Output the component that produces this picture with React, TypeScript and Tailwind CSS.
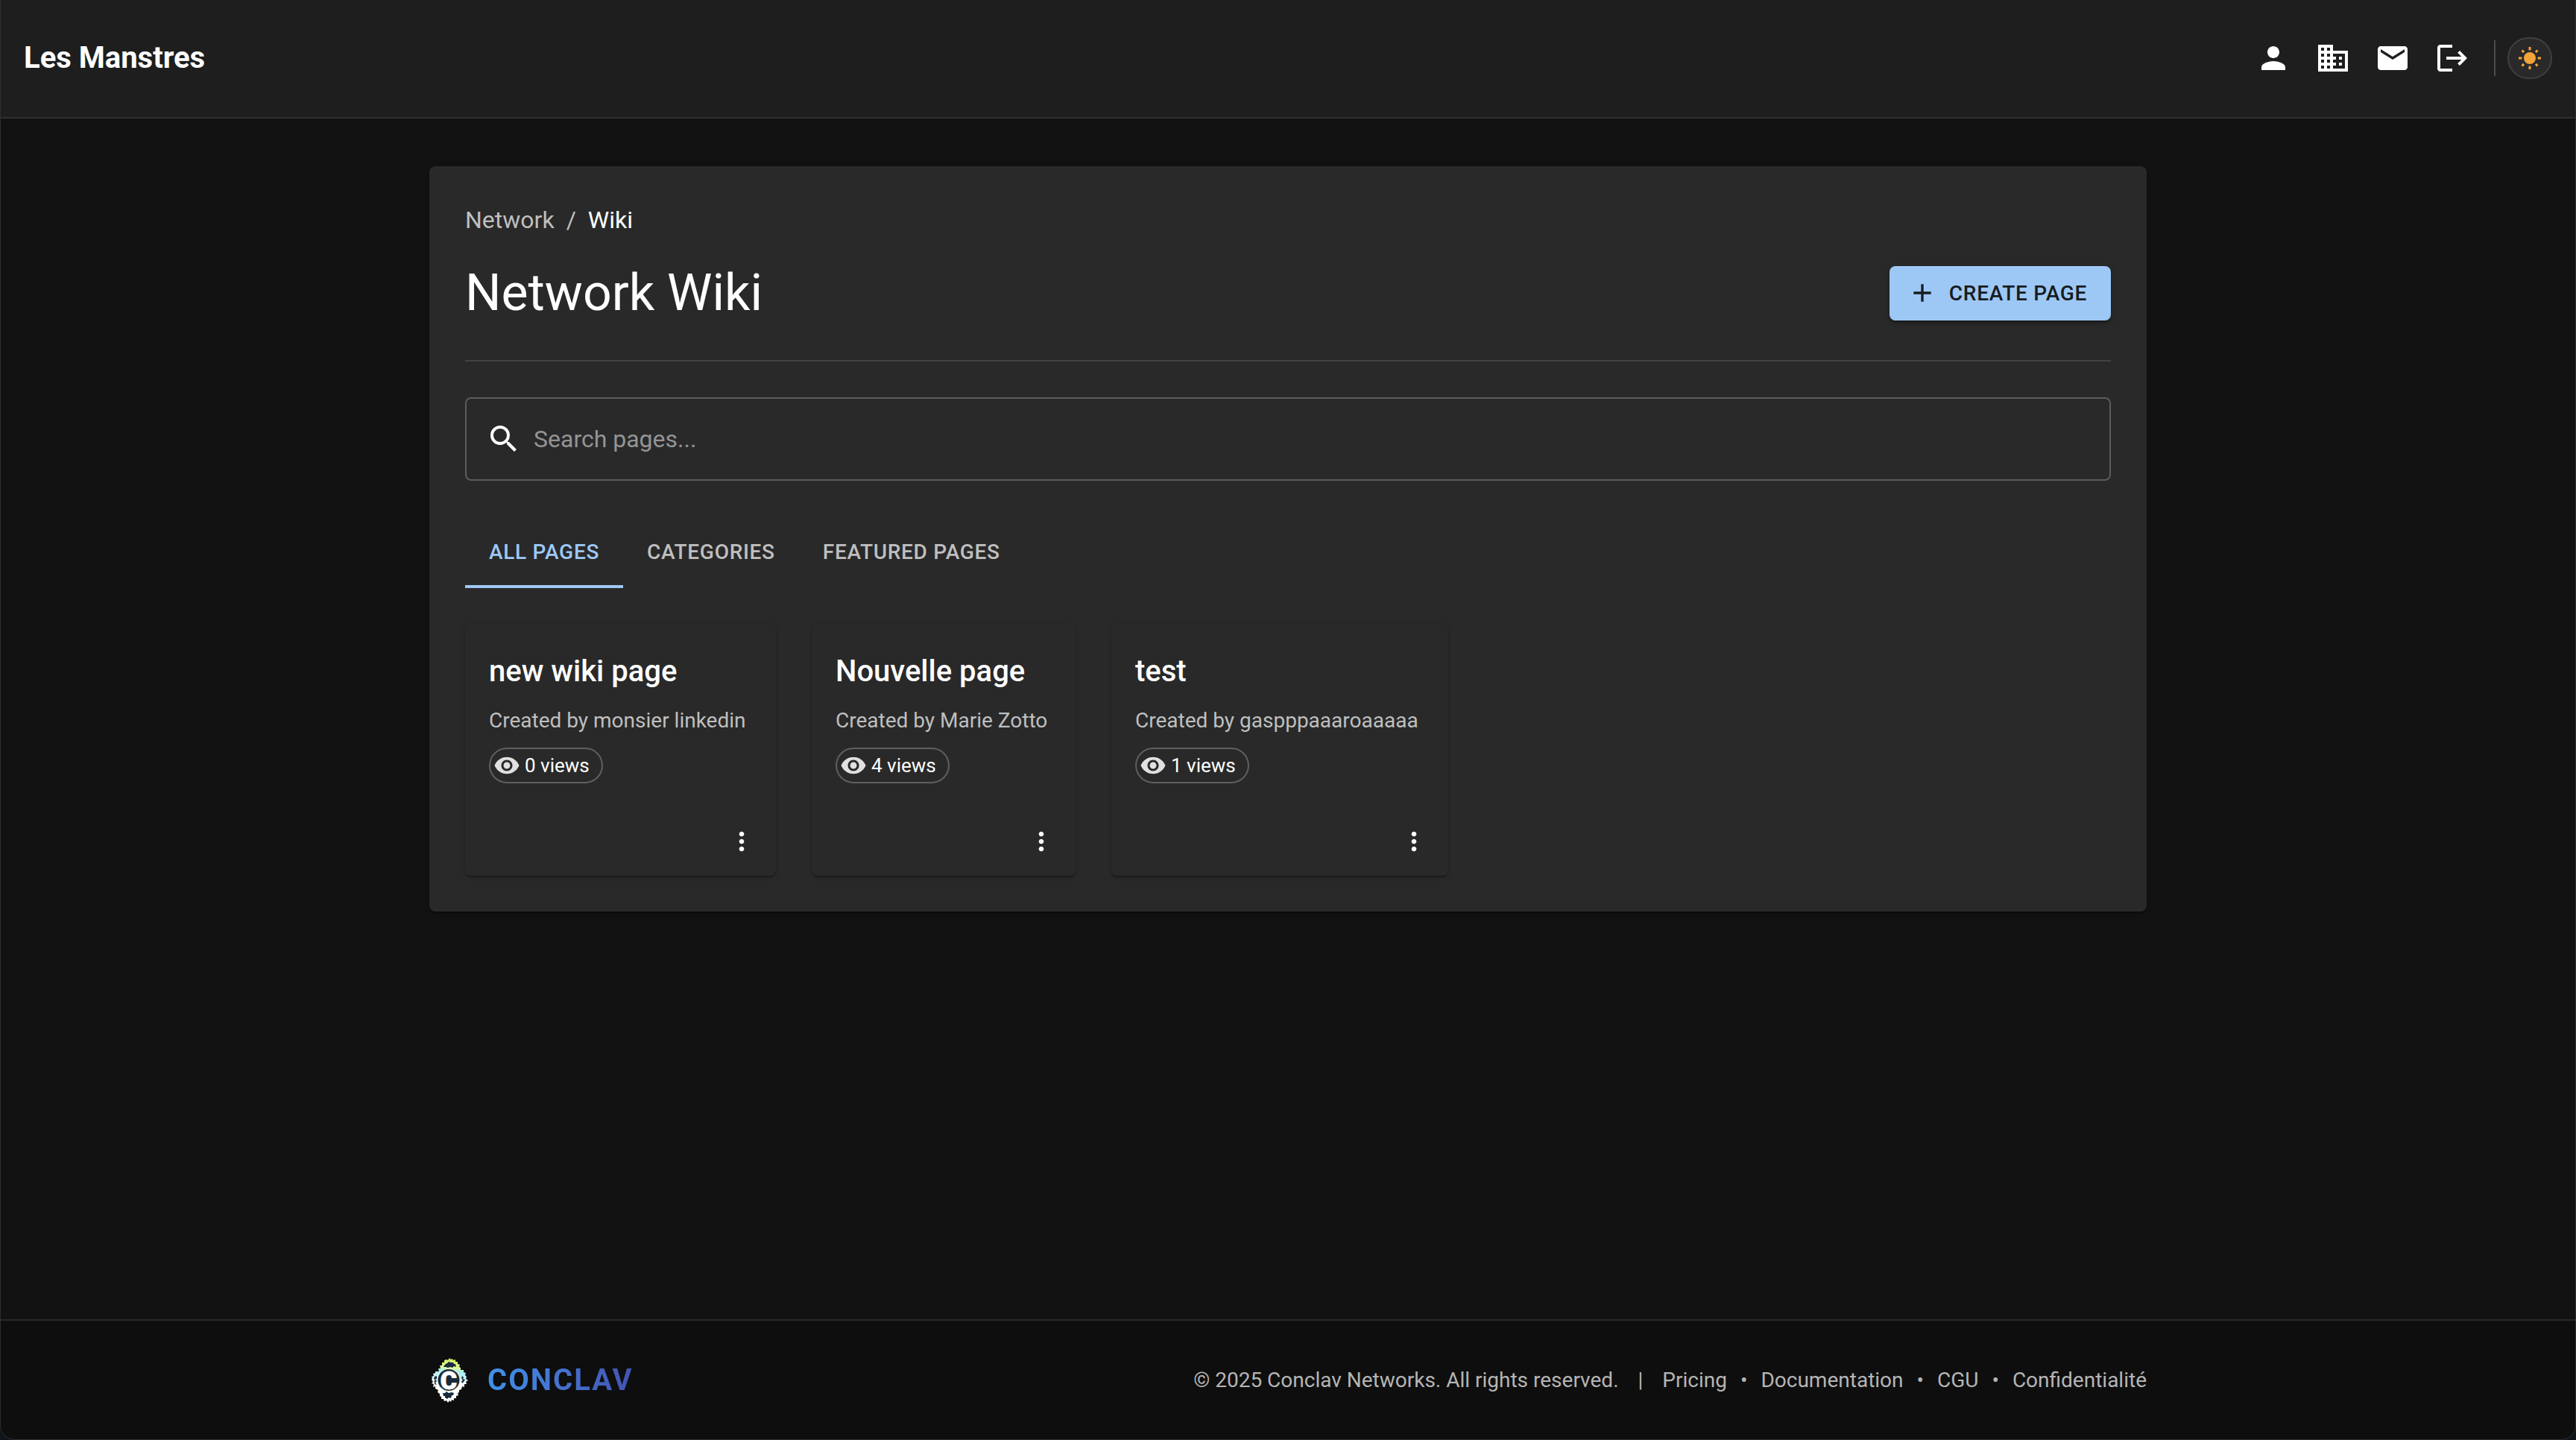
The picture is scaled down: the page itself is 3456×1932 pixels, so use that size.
import type { ReactNode } from "react";
import {
  MdPerson,
  MdBusiness,
  MdMail,
  MdLogout,
  MdAdd,
  MdSearch,
  MdVisibility,
  MdMoreVert,
} from "react-icons/md";

const wikiPages = [
  { title: "new wiki page", author: "monsier linkedin", views: 0, width: "min-w-[417px]" },
  { title: "Nouvelle page", author: "Marie Zotto", views: 4, width: "min-w-[354px]" },
  { title: "test", author: "gaspppaaaroaaaaa", views: 1, width: "min-w-[452px]" },
];

const tabs = ["All pages", "Categories", "Featured pages"];

const footerLinks = ["Pricing", "Documentation", "CGU", "Confidentialité"];

function IconButton({ label, children }: { label: string; children: ReactNode }) {
  return (
    <button type="button" aria-label={label} className="flex rounded-full p-4 text-white">
      {children}
    </button>
  );
}

function SunIcon() {
  return (
    <svg viewBox="-15 -15 30 30" className="size-[30px]" fill="#f2a33a" aria-hidden="true">
      <circle r="8" />
      {[0, 45, 90, 135, 180, 225, 270, 315].map((angle) => (
        <rect
          key={angle}
          x="-1.5"
          y={angle % 90 ? -14.8 : -15}
          width="3"
          height={angle % 90 ? 3.6 : 4.4}
          transform={`rotate(${angle})`}
        />
      ))}
    </svg>
  );
}

function Logo() {
  return (
    <svg viewBox="6 7 54 62" className="h-[62px] w-[54px]" aria-hidden="true">
      <defs>
        <linearGradient id="logo-fur" gradientUnits="userSpaceOnUse" x1="30" y1="8" x2="26" y2="48">
          <stop offset="0" stopColor="#d2f263" />
          <stop offset="0.3" stopColor="#e3f79a" />
          <stop offset="0.42" stopColor="#a5eef2" />
          <stop offset="0.65" stopColor="#c9f6f8" />
          <stop offset="0.8" stopColor="#ffffff" />
        </linearGradient>
      </defs>
      <path
        fill="url(#logo-fur)"
        d="M29 10 31 11 33 8 35 10 37 9 38 11 41 10 41 13 44 13 44 16 47 17 46 20 48 21 48 24 52 24 52 27 55 28 54 31 56 33 55 36 58 38 55 40 56 43 53 43 53 47 50 46 49 50 46 51 46 54 44 55 45 58 42 59 42 62 39 62 39 65 36 64 35 67 33 65 31 68 29 65 26 66 25 63 22 63 22 60 20 59 20 56 17 54 18 51 14 49 14 46 11 47 12 43 9 42 11 40 9 37 10 35 9 33 12 32 11 29 14 28 14 26 19 26 18 22 21 22 20 18 23 18 23 14 26 14 26 11Z"
      />
      <g fill="#1b2b3c">
        <path d="M28 16 30 15 32 13 35 14 38 14 39 16 41 16 42 20 39 19 37 21 34 20 31 21 28 20 25 20 26 18Z" />
        <path d="M13 33 16 32 16 36 14 36 16 39 14 41 16 44 13 43 13 40 12 39 14 38 12 36Z" />
        <path d="M50 32 52 34 51 36 54 37 52 40 50 42 49 39 51 38 49 35Z" />
        <path d="M24 55 27 55 29 53 32 55 36 54 39 55 38 58 36 58 35 62 32 61 30 63 27 61 27 59 25 59Z" />
      </g>
      <circle cx="32" cy="37.5" r="15.2" fill="none" stroke="#f4f6c4" strokeWidth="1" />
      <circle cx="32" cy="37.5" r="14.5" fill="#1b2b3c" />
      <text
        x="32"
        y="50"
        textAnchor="middle"
        fontSize="34"
        fontWeight="900"
        fill="#ffffff"
        stroke="#ffffff"
        strokeWidth="0.8"
      >
        C
      </text>
    </svg>
  );
}

function Header() {
  return (
    <header className="flex items-center justify-between border-b-2 border-[#303030] bg-[#1e1e1e] px-[31px] pt-[38px] pb-[39px]">
      <span className="text-[40px] leading-[64px] font-bold">Les Manstres</span>
      <div className="flex items-center">
        <nav className="flex items-center" aria-label="Account">
          <IconButton label="Profile"><MdPerson className="size-12" /></IconButton>
          <IconButton label="Networks"><MdBusiness className="size-12" /></IconButton>
          <IconButton label="Messages"><MdMail className="size-12" /></IconButton>
          <IconButton label="Log out"><MdLogout className="size-12" /></IconButton>
        </nav>
        <div className="mr-4 ml-4 h-12 w-0.5 bg-[#4b4b4b]" />
        <button
          type="button"
          aria-label="Switch to light mode"
          className="flex h-14 w-[60px] items-center justify-center rounded-[28px] border-2 border-[#404040] bg-[#292929]"
        >
          <SunIcon />
        </button>
      </div>
    </header>
  );
}

function WikiCard({
  title,
  author,
  views,
  width,
}: {
  title: string;
  author: string;
  views: number;
  width: string;
}) {
  return (
    <article
      className={
        "flex flex-col rounded-lg bg-[#292929] shadow-[0_4px_2px_-2px_rgba(0,0,0,0.2),0_2px_2px_0_rgba(0,0,0,0.14),0_2px_6px_0_rgba(0,0,0,0.12)] " +
        width
      }
    >
      <div className="p-8">
        <h2 className="mb-3.5 text-[40px] leading-[64px] font-medium">{title}</h2>
        <p className="mb-4 text-[28px] leading-10 text-[#bfbfbf]">Created by {author}</p>
        <div className="flex">
          <span className="flex h-12 items-center gap-1.5 rounded-full border-2 border-[#5f5f5f] pr-4 pl-1 text-[26px]">
            <MdVisibility className="size-9 text-[#e0e0e0]" />
            {views} views
          </span>
        </div>
      </div>
      <div className="flex justify-end p-4">
        <button type="button" aria-label={`Options for ${title}`} className="flex rounded-full p-2.5">
          <MdMoreVert className="size-10" />
        </button>
      </div>
    </article>
  );
}

function Footer() {
  return (
    <footer className="border-t-2 border-[#2b2b2b] bg-[#0e0e0e] px-12 pt-12 pb-[47px]">
      <div className="mx-auto flex h-16 max-w-[2304px] items-center justify-between">
        <a href="#" className="flex items-center gap-6">
          <Logo />
          <span className="bg-linear-to-r from-[#4092ea] to-[#4353b3] bg-clip-text text-[40px] font-bold tracking-wider text-transparent">
            CONCLAV
          </span>
        </a>
        <div className="flex items-center text-[28px] leading-10 text-[#b5b5b5]">
          <span>© 2025 Conclav Networks. All rights reserved.</span>
          <span className="mx-[26px]">|</span>
          <nav className="flex items-center gap-[18px]" aria-label="Legal">
            {footerLinks.map((link, i) => (
              <span key={link} className="flex items-center gap-[18px]">
                {i > 0 && <span>•</span>}
                <a href="#">{link}</a>
              </span>
            ))}
          </nav>
        </div>
      </div>
    </footer>
  );
}

export default function App() {
  return (
    <div className="bg-[#10151c] font-['Roboto',sans-serif] text-white">
      <div className="flex min-h-screen flex-col overflow-hidden rounded-b-[20px] border-x border-b border-[#2e2e2e] bg-[#121212]">
        <Header />
        <main className="grow px-12 py-16">
          <section className="mx-auto max-w-[2304px] rounded-lg bg-[#292929] p-12 shadow-[0_4px_2px_-2px_rgba(0,0,0,0.2),0_2px_2px_0_rgba(0,0,0,0.14),0_2px_6px_0_rgba(0,0,0,0.12)]">
            <nav aria-label="Breadcrumb" className="mb-8 flex gap-4 text-[32px] leading-[48px] text-[#bfbfbf]">
              <a href="#">Network</a>
              <span>/</span>
              <span className="text-white">Wiki</span>
            </nav>
            <div className="flex items-center justify-between">
              <h1 className="text-[68px] leading-[84px]">Network Wiki</h1>
              <button
                type="button"
                className="flex items-center gap-4 rounded-lg bg-[#9dc8f6] px-8 py-3 text-[28px] leading-[49px] font-medium tracking-wide text-[#171c21] uppercase shadow-[0_6px_2px_-4px_rgba(0,0,0,0.2),0_4px_4px_0_rgba(0,0,0,0.14),0_2px_10px_0_rgba(0,0,0,0.12)]"
              >
                <MdAdd className="-ml-2 size-10" />
                Create page
              </button>
            </div>
            <hr className="my-12 border-t-2 border-[#434343]" />
            <label className="flex h-28 items-center gap-4 rounded-lg border-2 border-[#5c5c5c] px-[26px]">
              <MdSearch className="size-12" />
              <input
                type="search"
                aria-label="Search pages"
                placeholder="Search pages..."
                className="grow bg-transparent text-[32px] leading-[48px] outline-none placeholder:text-[#949494]"
              />
            </label>
            <div role="tablist" className="my-12 flex">
              {tabs.map((tab, i) => (
                <button
                  key={tab}
                  type="button"
                  role="tab"
                  aria-selected={i === 0}
                  className={
                    "h-24 border-b-4 px-8 pt-1 text-[28px] font-medium tracking-wide uppercase " +
                    (i === 0 ? "border-[#9dc8f6] text-[#9dc8f6]" : "border-transparent text-[#bfbfbf]")
                  }
                >
                  {tab}
                </button>
              ))}
            </div>
            <div className="flex flex-wrap gap-12">
              {wikiPages.map((page) => (
                <WikiCard key={page.title} {...page} />
              ))}
            </div>
          </section>
        </main>
        <Footer />
      </div>
    </div>
  );
}
